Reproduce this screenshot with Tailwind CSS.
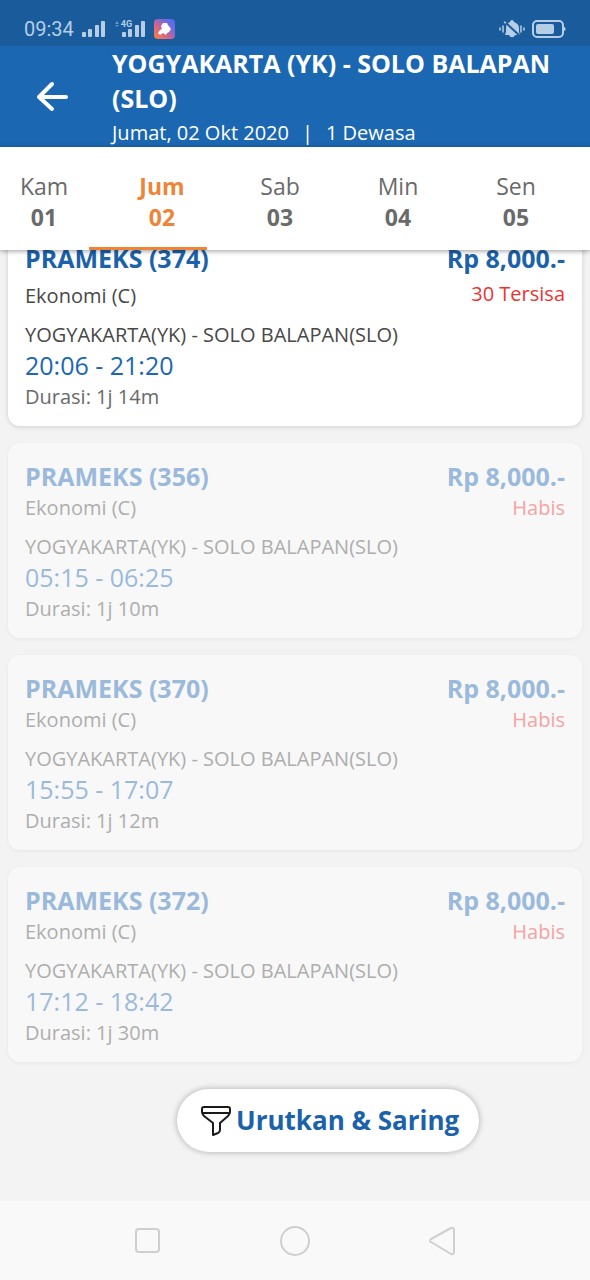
<!DOCTYPE html>
<html lang="id">
<head>
    <meta charset="UTF-8">
    <meta name="viewport" content="width=device-width, initial-scale=1.0">
    <title>Jadwal Kereta - Yogyakarta ke Solo Balapan</title>
    <script src="https://cdn.jsdelivr.net/npm/@tailwindcss/browser@4"></script>
</head>
<body class="font-['Open_Sans','Noto_Sans',sans-serif] bg-[#f3f3f3] min-h-screen flex flex-col overflow-x-hidden">
    <!-- Status bar -->
    <div class="h-[46px] shrink-0 bg-[#1a5c9b] flex items-center justify-between px-6 pt-3 text-[#b5cee6]">
        <div class="flex items-center gap-2">
            <span class="font-[Roboto,sans-serif] text-[20px] leading-6">09:34</span>
            <svg class="w-6 h-[18px]" viewBox="0 0 24 18" fill="currentColor" aria-hidden="true">
                <rect x="0" y="12" width="4" height="5" rx="1"/>
                <rect x="6" y="9" width="4" height="8" rx="1"/>
                <rect x="13" y="5" width="4" height="12" rx="1"/>
                <rect x="19" y="1" width="4" height="16" rx="1"/>
            </svg>
            <div class="relative w-8 h-[18px]">
                <svg class="w-8 h-[18px]" viewBox="0 0 32 18" fill="currentColor" aria-hidden="true">
                    <path d="M1 4l2-3 2 3zM1 5h4l-2 2z" opacity=".5"/>
                    <rect x="8" y="12" width="4" height="5" rx="1"/>
                    <rect x="14" y="9" width="4" height="8" rx="1"/>
                    <rect x="21" y="5" width="4" height="12" rx="1"/>
                    <rect x="27" y="1" width="4" height="16" rx="1"/>
                </svg>
                <span class="absolute left-[7px] top-0 font-[Roboto,sans-serif] font-bold text-[9px] leading-[8px]">4G</span>
            </div>
            <svg class="w-[21px] h-5" viewBox="0 0 21 20" aria-hidden="true">
                <defs>
                    <linearGradient id="appIcon" x1="0" y1="1" x2="1" y2="0">
                        <stop offset="0" stop-color="#f0883e"/>
                        <stop offset=".35" stop-color="#dc6580"/>
                        <stop offset=".7" stop-color="#7569dc"/>
                        <stop offset="1" stop-color="#4a6cf0"/>
                    </linearGradient>
                </defs>
                <rect width="21" height="20" rx="4" fill="url(#appIcon)"/>
                <path d="M9 4h4l1 2 3 4-2 3-2 1-1 2-3-2-3 2-2-2 2-3 2-1-1-3z" fill="#fff"/>
            </svg>
        </div>
        <div class="flex items-center gap-[7px]">
            <svg class="w-[26px] h-5" viewBox="0 0 26 20" aria-hidden="true">
                <path d="M13 1c1 0 2 1 2 2 3 1 5 3 5 6v4l1 3h-5c-1 3-5 3-6 0H6l1-3V9c0-3 1-5 4-6 0-1 1-2 2-2z" fill="currentColor"/>
                <path d="M4 7v6M1 9v2M22 7v6M25 9v2" stroke="currentColor" stroke-width="1.500" stroke-linecap="round"/>
                <path d="M6 3l15 14" stroke="#1a5c9b" stroke-width="2"/>
                <path d="M5 3l2 1" stroke="currentColor" stroke-width="1.500"/>
            </svg>
            <svg class="w-[34px] h-[18px]" viewBox="0 0 34 18" fill="none" aria-hidden="true">
                <rect x="1" y="1" width="30" height="16" rx="4" stroke="currentColor" stroke-width="2"/>
                <rect x="4" y="4" width="18" height="10" rx="2" fill="currentColor"/>
                <path d="M32 7c2 0 2 4 0 4z" fill="currentColor"/>
            </svg>
        </div>
    </div>

    <!-- Header -->
    <header class="h-[101px] shrink-0 bg-[#1b67b2] text-white flex">
        <button type="button" aria-label="Kembali" class="w-[112px] shrink-0 flex items-center pl-9">
            <svg class="w-8 h-8" viewBox="0 0 32 32" fill="none" stroke="currentColor" stroke-width="4" stroke-linecap="round" stroke-linejoin="round">
                <path d="M30 16H4M16 3L3 16l13 12"/>
            </svg>
        </button>
        <div>
            <h1 class="text-[25px] leading-[35px] font-bold">YOGYAKARTA (YK) - SOLO BALAPAN (SLO)</h1>
            <p class="flex text-[20px] leading-[34px]">
                <span>Jumat, 02 Okt 2020</span>
                <span class="mx-[13px]">|</span>
                <span>1 Dewasa</span>
            </p>
        </div>
    </header>

    <!-- Date tabs -->
    <nav class="relative z-10 shrink-0 bg-white shadow-[0_1px_5px_rgba(0,0,0,0.4)] overflow-x-clip">
        <div class="flex -ml-[15px] w-full text-[23px] leading-[31px] text-[#6a6a6a]">
            <button type="button" class="w-1/5 shrink-0 pt-6 pb-[14px]">Kam<br><span class="font-bold">01</span></button>
            <button type="button" class="w-1/5 shrink-0 pt-6 pb-[14px] text-[#ee8437] font-bold">Jum<br><span>02</span></button>
            <button type="button" class="w-1/5 shrink-0 pt-6 pb-[14px]">Sab<br><span class="font-bold">03</span></button>
            <button type="button" class="w-1/5 shrink-0 pt-6 pb-[14px]">Min<br><span class="font-bold">04</span></button>
            <button type="button" class="w-1/5 shrink-0 pt-6 pb-[14px]">Sen<br><span class="font-bold">05</span></button>
        </div>
        <div class="ml-[15%] w-1/5 h-[3px] bg-[#ee8437]"></div>
    </nav>

    <!-- Train list -->
    <main class="flex-1 overflow-hidden px-2 pb-12">
        <div class="-mt-[25px] flex flex-col gap-[17px]">
            <article class="rounded-xl bg-white shadow-[0_1px_5px_rgba(0,0,0,0.15)] px-[17px] py-4 text-[20px] leading-[27px]">
                <div class="flex justify-between">
                    <div>
                        <h2 class="text-[25px] leading-[35px] font-bold text-[#1b62aa]">PRAMEKS (374)</h2>
                        <p class="mt-[6px] text-[#484848]">Ekonomi (C)</p>
                    </div>
                    <div class="text-right">
                        <p class="text-[25px] leading-[35px] font-bold text-[#1b62aa]">Rp 8,000.-</p>
                        <p class="mt-1 text-[#ee3333]">30 Tersisa</p>
                    </div>
                </div>
                <p class="mt-3 text-[#484848]">YOGYAKARTA(YK) - SOLO BALAPAN(SLO)</p>
                <p class="text-[25px] leading-[35px] text-[#1b67b2]">20:06 - 21:20</p>
                <p class="text-[#6a6a6a]">Durasi: 1j 14m</p>
            </article>

            <!-- Sold out -->
            <article class="rounded-xl bg-[#f8f8f8] shadow-[0_1px_4px_rgba(0,0,0,0.05)] px-[17px] py-4 text-[20px] leading-[27px] text-[#aeaeae]">
                <div class="flex justify-between">
                    <div>
                        <h2 class="text-[25px] leading-[35px] font-bold text-[#9bbadb]">PRAMEKS (356)</h2>
                        <p>Ekonomi (C)</p>
                    </div>
                    <div class="text-right">
                        <p class="text-[25px] leading-[35px] font-bold text-[#9bbadb]">Rp 8,000.-</p>
                        <p class="text-[#f5a3a3]">Habis</p>
                    </div>
                </div>
                <p class="mt-3">YOGYAKARTA(YK) - SOLO BALAPAN(SLO)</p>
                <p class="text-[25px] leading-[35px] text-[#9bbadb]">05:15 - 06:25</p>
                <p>Durasi: 1j 10m</p>
            </article>

            <article class="rounded-xl bg-[#f8f8f8] shadow-[0_1px_4px_rgba(0,0,0,0.05)] px-[17px] py-4 text-[20px] leading-[27px] text-[#aeaeae]">
                <div class="flex justify-between">
                    <div>
                        <h2 class="text-[25px] leading-[35px] font-bold text-[#9bbadb]">PRAMEKS (370)</h2>
                        <p>Ekonomi (C)</p>
                    </div>
                    <div class="text-right">
                        <p class="text-[25px] leading-[35px] font-bold text-[#9bbadb]">Rp 8,000.-</p>
                        <p class="text-[#f5a3a3]">Habis</p>
                    </div>
                </div>
                <p class="mt-3">YOGYAKARTA(YK) - SOLO BALAPAN(SLO)</p>
                <p class="text-[25px] leading-[35px] text-[#9bbadb]">15:55 - 17:07</p>
                <p>Durasi: 1j 12m</p>
            </article>

            <article class="rounded-xl bg-[#f8f8f8] shadow-[0_1px_4px_rgba(0,0,0,0.05)] px-[17px] py-4 text-[20px] leading-[27px] text-[#aeaeae]">
                <div class="flex justify-between">
                    <div>
                        <h2 class="text-[25px] leading-[35px] font-bold text-[#9bbadb]">PRAMEKS (372)</h2>
                        <p>Ekonomi (C)</p>
                    </div>
                    <div class="text-right">
                        <p class="text-[25px] leading-[35px] font-bold text-[#9bbadb]">Rp 8,000.-</p>
                        <p class="text-[#f5a3a3]">Habis</p>
                    </div>
                </div>
                <p class="mt-3">YOGYAKARTA(YK) - SOLO BALAPAN(SLO)</p>
                <p class="text-[25px] leading-[35px] text-[#9bbadb]">17:12 - 18:42</p>
                <p>Durasi: 1j 30m</p>
            </article>
        </div>

        <!-- Sort and filter -->
        <button type="button" class="mt-[27px] ml-[169px] h-[63px] pl-[23px] pr-5 flex items-center gap-1 rounded-full bg-white shadow-[0_0_6px_rgba(0,0,0,0.3)] text-[26px] leading-[35px] font-bold text-[#1b62aa]">
            <svg class="w-8 h-8" viewBox="0 0 32 32" fill="none" stroke="#1a1a1a" stroke-width="2" stroke-linejoin="round" aria-hidden="true">
                <path d="M4 2h24q2 0 2 2v3q0 2-2 4l-8 7v7q0 2-2 3l-5 2V18L4 11Q2 9 2 7V4q0-2 2-2zM2 8h28"/>
            </svg>
            <span>Urutkan &amp; Saring</span>
        </button>
    </main>

    <!-- System navigation -->
    <footer class="h-[79px] shrink-0 bg-[#f9f9f9] flex items-center justify-center gap-[116px] text-[#cfcfcf]">
        <button type="button" aria-label="Aplikasi terbaru">
            <svg class="w-8 h-8" viewBox="0 0 32 32" fill="none" stroke="currentColor" stroke-width="2"><rect x="5" y="4" width="23" height="23" rx="3"/></svg>
        </button>
        <button type="button" aria-label="Beranda">
            <svg class="w-8 h-8" viewBox="0 0 32 32" fill="none" stroke="currentColor" stroke-width="2"><circle cx="16" cy="16" r="14"/></svg>
        </button>
        <button type="button" aria-label="Kembali ke layar sebelumnya">
            <svg class="w-8 h-8" viewBox="0 0 32 32" fill="none" stroke="currentColor" stroke-width="2" stroke-linejoin="round"><path d="M4 14L24 3q3-1 3 2v22q0 3-3 2L4 17q-2-1 0-3z"/></svg>
        </button>
    </footer>
</body>
</html>
